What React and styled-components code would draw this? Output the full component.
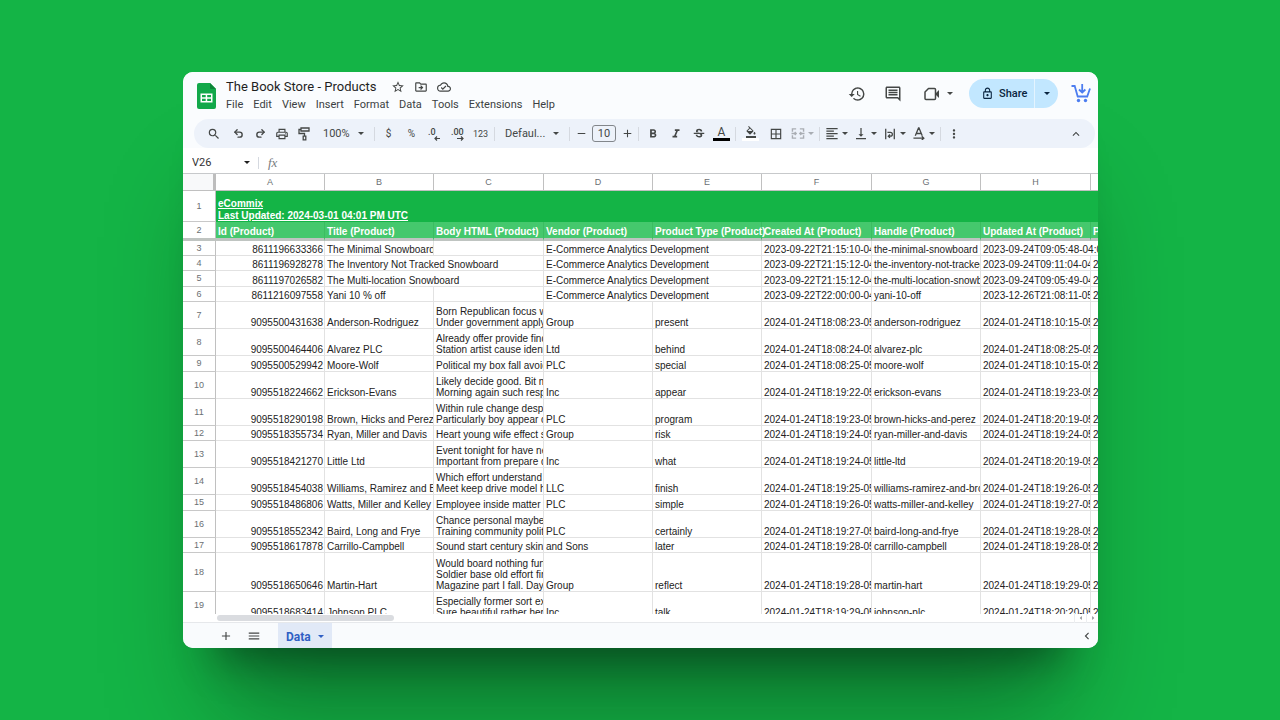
import styled, { createGlobalStyle } from "styled-components";
import { Undo2, Redo2 } from "lucide-react";
import {
  MdSearch,
  MdOutlinePrint,
  MdStarOutline,
  MdOutlineDriveFileMove,
  MdOutlineCloudDone,
  MdHistory,
  MdOutlineComment,
  MdOutlineLock,
  MdFormatBold,
  MdFormatItalic,
  MdStrikethroughS,
  MdFormatColorFill,
  MdBorderAll,
  MdFormatAlignLeft,
  MdVerticalAlignBottom,
  MdMoreVert,
  MdKeyboardArrowUp,
  MdKeyboardArrowLeft,
  MdArrowLeft,
  MdArrowRight,
  MdAdd,
  MdRemove,
  MdMenu,
} from "react-icons/md";

const GlobalStyle = createGlobalStyle`
  * {
    box-sizing: border-box;
  }

  body {
    margin: 0;
    background: #14b446;
    font-family: Roboto, "Liberation Sans", sans-serif;
    color: #1f1f1f;
  }

  button,
  input {
    margin: 0;
    padding: 0;
    border: 0;
    background: none;
    color: inherit;
    font: inherit;
  }
`;

const menus = [
  "File",
  "Edit",
  "View",
  "Insert",
  "Format",
  "Data",
  "Tools",
  "Extensions",
  "Help",
];

const columns = [
  { letter: "A", label: "Id (Product)", width: 109 },
  { letter: "B", label: "Title (Product)", width: 109 },
  { letter: "C", label: "Body HTML (Product)", width: 110 },
  { letter: "D", label: "Vendor (Product)", width: 109 },
  { letter: "E", label: "Product Type (Product)", width: 109 },
  { letter: "F", label: "Created At (Product)", width: 110 },
  { letter: "G", label: "Handle (Product)", width: 109 },
  { letter: "H", label: "Updated At (Product)", width: 110 },
  { letter: "", label: "P", width: 110 },
];

// row height, then one text per column; a null cell is covered by the text on its left
const rows = [
  [15, "8611196633366", "The Minimal Snowboard", "", "E-Commerce Analytics Development", null, "2023-09-22T21:15:10-04", "the-minimal-snowboard", "2023-09-24T09:05:48-04:0", null],
  [15, "8611196928278", "The Inventory Not Tracked Snowboard", null, "E-Commerce Analytics Development", null, "2023-09-22T21:15:12-04", "the-inventory-not-tracked", "2023-09-24T09:11:04-04", "2"],
  [16, "8611197026582", "The Multi-location Snowboard", null, "E-Commerce Analytics Development", null, "2023-09-22T21:15:12-04", "the-multi-location-snowbo", "2023-09-24T09:05:49-04", "2"],
  [15, "8611216097558", "Yani 10 % off", "", "E-Commerce Analytics Development", null, "2023-09-22T22:00:00-04", "yani-10-off", "2023-12-26T21:08:11-05", "2"],
  [27, "9095500431638", "Anderson-Rodriguez", "Born Republican focus w\nUnder government apply", "Group", "present", "2024-01-24T18:08:23-05", "anderson-rodriguez", "2024-01-24T18:10:15-05", "2"],
  [27, "9095500464406", "Alvarez PLC", "Already offer provide find\nStation artist cause identi", "Ltd", "behind", "2024-01-24T18:08:24-05", "alvarez-plc", "2024-01-24T18:08:25-05", "2"],
  [16, "9095500529942", "Moore-Wolf", "Political my box fall avoid", "PLC", "special", "2024-01-24T18:08:25-05", "moore-wolf", "2024-01-24T18:10:15-05", "2"],
  [27, "9095518224662", "Erickson-Evans", "Likely decide good. Bit m\nMorning again such respo", "Inc", "appear", "2024-01-24T18:19:22-05", "erickson-evans", "2024-01-24T18:19:23-05", "2"],
  [27, "9095518290198", "Brown, Hicks and Perez", "Within rule change despit\nParticularly boy appear o", "PLC", "program", "2024-01-24T18:19:23-05", "brown-hicks-and-perez", "2024-01-24T18:20:19-05", "2"],
  [15, "9095518355734", "Ryan, Miller and Davis", "Heart young wife effect st", "Group", "risk", "2024-01-24T18:19:24-05", "ryan-miller-and-davis", "2024-01-24T18:19:24-05", "2"],
  [27, "9095518421270", "Little Ltd", "Event tonight for have ne\nImportant from prepare d", "Inc", "what", "2024-01-24T18:19:24-05", "little-ltd", "2024-01-24T18:20:19-05", "2"],
  [27, "9095518454038", "Williams, Ramirez and Br", "Which effort understand f\nMeet keep drive model he", "LLC", "finish", "2024-01-24T18:19:25-05", "williams-ramirez-and-broo", "2024-01-24T18:19:26-05", "2"],
  [16, "9095518486806", "Watts, Miller and Kelley", "Employee inside matter r", "PLC", "simple", "2024-01-24T18:19:26-05", "watts-miller-and-kelley", "2024-01-24T18:19:27-05", "2"],
  [27, "9095518552342", "Baird, Long and Frye", "Chance personal maybe\nTraining community politi", "PLC", "certainly", "2024-01-24T18:19:27-05", "baird-long-and-frye", "2024-01-24T18:19:28-05", "2"],
  [15, "9095518617878", "Carrillo-Campbell", "Sound start century skin o", "and Sons", "later", "2024-01-24T18:19:28-05", "carrillo-campbell", "2024-01-24T18:19:28-05", "2"],
  [39, "9095518650646", "Martin-Hart", "Would board nothing func\nSoldier base old effort firs\nMagazine part I fall. Day", "Group", "reflect", "2024-01-24T18:19:28-05", "martin-hart", "2024-01-24T18:19:29-05", "2"],
  [27, "9095518683414", "Johnson PLC", "Especially former sort exe\nSure beautiful rather hers", "Inc", "talk", "2024-01-24T18:19:29-05", "johnson-plc", "2024-01-24T18:20:20-05", "2"],
];

const Stage = styled.main`
  display: flex;
  height: 100vh;
  padding: 72px 182px 72px 183px;
  background: #14b446;
  overflow: hidden;
`;

const Window = styled.section`
  flex: 1;
  min-width: 0;
  display: flex;
  flex-direction: column;
  border-radius: 10px;
  background: #fff;
  box-shadow:
    0 95px 100px -35px rgba(0, 20, 10, 0.4),
    0 45px 40px -35px rgba(0, 20, 10, 0.45);
`;

const Clip = styled.div`
  flex: 1;
  min-height: 0;
  display: flex;
  flex-direction: column;
  border-radius: 10px;
  overflow: hidden;
`;

const Top = styled.header`
  display: flex;
  height: 47px;
  flex: none;
  padding: 7px 7px 0 14px;
  background: #fafcfe;
`;

const Logo = styled.svg`
  width: 19px;
  height: 26px;
  margin-top: 4px;
  flex: none;
`;

const Names = styled.div`
  margin-left: 10px;
  flex: 1;
`;

const TitleRow = styled.div`
  display: flex;
  align-items: center;
  height: 16px;
  gap: 7px;
`;

const Title = styled.h1`
  margin: 0 7px 0 0;
  font-size: 13px;
  line-height: 16px;
  font-weight: 400;
  white-space: nowrap;
`;

const IconButton = styled.button`
  display: flex;
  align-items: center;
  justify-content: center;
  flex: none;
  width: ${(props) => props.$w || 16}px;
  height: ${(props) => props.$h || 16}px;
  color: #444746;
  font-size: ${(props) => props.$size || 14}px;
`;

const CallButton = styled(IconButton)`
  justify-content: flex-end;
  gap: 7px;
`;

const Menus = styled.nav`
  display: flex;
  gap: 10px;
  margin-top: 3px;
`;

const MenuButton = styled.button`
  font-size: 11px;
  line-height: 14px;
  color: #3c3f42;
`;

const Actions = styled.div`
  display: flex;
  align-items: center;
  height: 29px;
`;

const Caret = styled.span`
  flex: none;
  border: 3px solid transparent;
  border-top-color: currentColor;
  border-bottom: 0;
`;

const Share = styled.div`
  display: flex;
  height: 29px;
  margin: 0 13px 0 16px;
  border-radius: 15px;
  background: #c2e7ff;
  color: #0a2540;
  overflow: hidden;
`;

const ShareMain = styled.button`
  display: flex;
  align-items: center;
  gap: 5px;
  width: 65px;
  padding-left: 12px;
  font-size: 11px;
  font-weight: 500;
`;

const ShareMore = styled.button`
  display: flex;
  align-items: center;
  justify-content: center;
  width: 24px;
  border-left: 1px solid #e4f4ff;
`;

const ToolbarWrap = styled.div`
  flex: none;
  padding: 0 3px 0 11px;
  background: #fafcfe;
`;

const Toolbar = styled.div`
  display: flex;
  align-items: center;
  height: 29px;
  padding: 0 8px 0 7px;
  border-radius: 15px;
  background: #edf2fa;
  color: #444746;
`;

const Divider = styled.span`
  flex: none;
  width: 1px;
  height: ${(props) => props.$h || 14}px;
  margin: 0 2px;
  background: #d5d9e0;
`;

const PickerButton = styled.button`
  display: flex;
  align-items: center;
  justify-content: space-between;
  flex: none;
  width: ${(props) => props.$w}px;
  padding: 0 8px;
  font-size: 11px;
`;

const TextTool = styled(IconButton)`
  font-size: ${(props) => props.$size || 10}px;
`;

const DropTool = styled.button`
  display: flex;
  align-items: center;
  flex: none;
  gap: 2px;
  width: 29px;
  padding: 0 2px;
  font-size: 15px;
  color: ${(props) => (props.disabled ? "#a9adb3" : "#444746")};

  svg {
    width: 16px;
  }
`;

const SizeInput = styled.input`
  flex: none;
  width: 24px;
  height: 17px;
  margin: 0 2px;
  border: 1px solid #82868b;
  border-radius: 3px;
  font-size: 11px;
  text-align: center;
`;

const ColorTool = styled.button`
  display: flex;
  flex-direction: column;
  align-items: center;
  flex: none;
  width: ${(props) => props.$w}px;
  font-size: 12px;
  line-height: 12px;

  &::after {
    content: "";
    width: 17px;
    height: 3px;
    background: ${(props) => props.$bar};
  }
`;

const Push = styled.span`
  flex: 1;
`;

const FormulaBar = styled.div`
  display: flex;
  align-items: center;
  flex: none;
  height: 25px;
  padding: 4px 9px 0;
`;

const NameBox = styled.input`
  width: 52px;
  font-size: 11px;
  color: #333;
`;

const Fx = styled.label`
  margin: 0 8px 0 6px;
  padding-left: 1px;
  font-family: "Liberation Serif", serif;
  font-style: italic;
  font-size: 13px;
  color: #777b80;
`;

const NameMenu = styled.button`
  display: flex;
  width: 12px;
`;

const FormulaInput = styled.input`
  flex: 1;
  font-size: 11px;
  outline: none;
`;

const Grid = styled.div`
  flex: 1;
  min-height: 0;
  overflow: hidden;
  border-top: 1px solid #c7c9cb;
`;

const Table = styled.table`
  table-layout: fixed;
  width: 1018px;
  border-spacing: 0;
  font-family: "Liberation Sans", Arial, sans-serif;
  font-size: 10px;
  line-height: 11px;
`;

const Corner = styled.td`
  padding: 0;
  background: #f8f9fa;
  border-right: 3px solid #bdbdbd;
  border-bottom: 1px solid #c0c0c0;
`;

const ColHead = styled.th`
  padding: 0;
  border-right: 1px solid #c0c0c0;
  border-bottom: 1px solid #c0c0c0;
  font-size: 9px;
  font-weight: 400;
  color: #6b6f73;
`;

const RowHead = styled.th`
  padding: 0;
  border-right: 1px solid #c0c0c0;
  border-bottom: ${(props) => (props.$frozen ? "3px solid #bfc4c1" : "1px solid #c8c8c8")};
  font-size: 9px;
  font-weight: 400;
  color: #6b6f73;
  vertical-align: middle;
`;

const Row = styled.tr`
  height: ${(props) => props.$h}px;
`;

const Cell = styled.td`
  padding: 0 1px 0 2px;
  border-right: 1px solid #e2e2e2;
  border-bottom: 1px solid #e2e2e2;
  vertical-align: bottom;
  white-space: pre;
  overflow: hidden;
  color: #222;
  text-align: ${(props) => (props.$number ? "right" : "left")};
`;

const BannerCell = styled.td`
  padding: 0 2px;
  background: #14b446;
  vertical-align: bottom;
  line-height: 12px;
  color: #fff;
  font-weight: 700;

  a {
    color: inherit;
    white-space: pre;
  }
`;

const LabelCell = styled.th`
  padding: 2px 0 0 2px;
  border-right: 1px solid #3bbd62;
  border-bottom: 3px solid #bfc4c1;
  background: #45c86d;
  color: #fff;
  text-align: left;
  white-space: nowrap;
`;

const ScrollTrack = styled.div`
  display: flex;
  align-items: center;
  flex: none;
  height: 9px;
  padding-left: 34px;
  border-bottom: 1px solid #e6e8eb;
  color: #8c9094;
`;

const Thumb = styled.span`
  width: 177px;
  height: 6px;
  border-radius: 3px;
  background: #dadce0;
`;

const ScrollArrow = styled.button`
  display: flex;
  justify-content: center;
  width: 12px;
  border-left: 1px solid #eceef0;
`;

const Tabs = styled.footer`
  display: flex;
  align-items: center;
  flex: none;
  height: 25px;
  padding: 0 3px 0 31px;
  background: #f9fbfd;
`;

const Tab = styled.button`
  display: flex;
  align-items: center;
  gap: 7px;
  height: 25px;
  margin-left: 8px;
  padding: 2px 8px 0;
  background: #e1e9f7;
  color: #2f5fc4;
  font-size: 12px;
  font-weight: 700;
`;

const SheetsLogo = () => (
  <Logo viewBox="0 0 19 26">
    <path d="M2 0h11l6 6v18a2 2 0 0 1-2 2H2a2 2 0 0 1-2-2V2a2 2 0 0 1 2-2z" fill="#12a84a" />
    <path d="M13 0l6 6h-5a1 1 0 0 1-1-1z" fill="#0b8537" />
    <path d="M3.500 10.500h12v9h-12zM5 12v2.200h3.700V12zm5.200 0v2.200H14V12zM5 15.700V18h3.700v-2.300zm5.200 0V18H14v-2.300z" fill="#fff" fillRule="evenodd" />
  </Logo>
);

const VideoIcon = () => (
  <svg width="16" height="14" viewBox="0 0 16 14" fill="none" stroke="currentColor" strokeWidth="1.500">
    <path d="M4.500 1.500h6a1 1 0 0 1 1 1v9a1 1 0 0 1-1 1h-8.500a1 1 0 0 1-1-1v-6.500z" strokeLinejoin="round" />
    <path d="M12 6l3-3v8l-3-3z" fill="currentColor" stroke="none" />
  </svg>
);

const CartIcon = () => (
  <svg width="20" height="19" viewBox="0 0 20 19" fill="none" stroke="#4c7df0" strokeWidth="1.800">
    <path d="M.5 2h3.200l3 10.500h9.500L19 4.500" />
    <path d="M11.200 0v8M8 5.500l3.200 3 3.200-3" />
    <circle cx="7.500" cy="16.500" r="1.700" fill="#4c7df0" stroke="none" />
    <circle cx="14.500" cy="16.500" r="1.700" fill="#4c7df0" stroke="none" />
  </svg>
);

const RollerIcon = () => (
  <svg width="12" height="14" viewBox="0 0 12 14" fill="none" stroke="currentColor" strokeWidth="1.300">
    <path d="M3 1h8v3H3zM3 2.500H1v4h5.500V9M5.200 9.200h2.600v3.600H5.200z" />
  </svg>
);

const DecimalIcon = ({ zeros, more }) => (
  <svg width="14" height="14" viewBox="0 0 14 14" fill="none" stroke="currentColor" strokeWidth="1.200">
    <text x="0" y="8" fill="currentColor" stroke="none" fontSize="9" fontWeight="500">
      {zeros}
    </text>
    <path d={more ? "M6 11.500h6M10 9.500l2 2-2 2" : "M12 11.500H7M9 9.500l-2 2 2 2"} />
  </svg>
);

const MergeIcon = () => (
  <svg height="13" viewBox="0 0 16 14" fill="none" stroke="currentColor" strokeWidth="1.500">
    <path d="M6 2H2v3M10 2h4v3M6 12H2V9M10 12h4V9M1 7h5M15 7h-5M4.500 5.500L6 7 4.500 8.500M11.500 5.500L10 7l1.500 1.500" />
  </svg>
);

const WrapIcon = () => (
  <svg height="12" viewBox="0 0 16 14" fill="none" stroke="currentColor" strokeWidth="1.500">
    <path d="M3 1v12M13 1v12M5 5h3.500a2 2 0 0 1 0 4.500H6.500M8 7.500l-2 2 2 2" />
  </svg>
);

const RotateIcon = () => (
  <svg height="13" viewBox="0 0 16 14" fill="none" stroke="currentColor" strokeWidth="1.400">
    <path d="M4 9.500L7.500 1h.5l3.500 8.500M5.200 7h5M2 12h11M11 10l2.200 2-2.200 2" />
  </svg>
);

const AppHeader = () => (
  <Top>
    <SheetsLogo />
    <Names>
      <TitleRow>
        <Title>The Book Store - Products</Title>
        <IconButton aria-label="Star">
          <MdStarOutline />
        </IconButton>
        <IconButton aria-label="Move">
          <MdOutlineDriveFileMove />
        </IconButton>
        <IconButton aria-label="Saved to cloud">
          <MdOutlineCloudDone />
        </IconButton>
      </TitleRow>
      <Menus>
        {menus.map((menu) => (
          <MenuButton key={menu}>{menu}</MenuButton>
        ))}
      </Menus>
    </Names>
    <Actions>
      <IconButton aria-label="History" $w={36} $size={18}>
        <MdHistory />
      </IconButton>
      <IconButton aria-label="Comments" $w={36} $size={18}>
        <MdOutlineComment />
      </IconButton>
      <CallButton aria-label="Join a call" $w={42}>
        <VideoIcon />
        <Caret />
      </CallButton>
      <Share>
        <ShareMain>
          <MdOutlineLock size={13} />
          Share
        </ShareMain>
        <ShareMore aria-label="Share options">
          <Caret />
        </ShareMore>
      </Share>
      <IconButton aria-label="Add-on" $w={20} $h={20}>
        <CartIcon />
      </IconButton>
    </Actions>
  </Top>
);

const FormatToolbar = () => (
  <ToolbarWrap>
    <Toolbar role="toolbar">
      <IconButton aria-label="Search" $w={26}><MdSearch /></IconButton>
      <IconButton aria-label="Undo" $w={22}><Undo2 size={11} strokeWidth={3} /></IconButton>
      <IconButton aria-label="Redo" $w={22}><Redo2 size={11} strokeWidth={3} /></IconButton>
      <IconButton aria-label="Print" $w={22}><MdOutlinePrint /></IconButton>
      <IconButton aria-label="Paint format" $w={22}><RollerIcon /></IconButton>
      <PickerButton $w={57}>100% <Caret /></PickerButton>
      <Divider />
      <TextTool $w={23}>$</TextTool>
      <TextTool $w={23}>%</TextTool>
      <TextTool $w={23} aria-label="Fewer decimals"><DecimalIcon zeros=".0" /></TextTool>
      <TextTool $w={23} aria-label="More decimals"><DecimalIcon zeros=".00" more /></TextTool>
      <TextTool $w={23} $size={9}>123</TextTool>
      <Divider />
      <PickerButton $w={70}>Defaul... <Caret /></PickerButton>
      <Divider />
      <IconButton aria-label="Smaller" $w={18} $size={13}><MdRemove /></IconButton>
      <SizeInput aria-label="Font size" defaultValue="10" />
      <IconButton aria-label="Larger" $w={18} $size={13}><MdAdd /></IconButton>
      <Divider />
      <IconButton aria-label="Bold" $w={23}><MdFormatBold /></IconButton>
      <IconButton aria-label="Italic" $w={23}><MdFormatItalic /></IconButton>
      <IconButton aria-label="Strikethrough" $w={23}><MdStrikethroughS /></IconButton>
      <ColorTool $w={23} $bar="#000">A</ColorTool>
      <Divider />
      <ColorTool $w={25} $bar="#fff" aria-label="Fill color"><MdFormatColorFill /></ColorTool>
      <IconButton aria-label="Borders" $w={25}><MdBorderAll /></IconButton>
      <DropTool aria-label="Merge cells" disabled><MergeIcon /><Caret /></DropTool>
      <Divider />
      <DropTool aria-label="Horizontal align"><MdFormatAlignLeft /><Caret /></DropTool>
      <DropTool aria-label="Vertical align"><MdVerticalAlignBottom /><Caret /></DropTool>
      <DropTool aria-label="Text wrapping"><WrapIcon /><Caret /></DropTool>
      <DropTool aria-label="Text rotation"><RotateIcon /><Caret /></DropTool>
      <Divider />
      <IconButton aria-label="More" $w={22}><MdMoreVert /></IconButton>
      <Push />
      <IconButton aria-label="Hide the menus" $w={22}><MdKeyboardArrowUp /></IconButton>
    </Toolbar>
  </ToolbarWrap>
);

const SheetRow = ({ number, height, cells }) => (
  <Row $h={height}>
    <RowHead scope="row">{number}</RowHead>
    {cells.map((text, i) =>
      text === null ? null : (
        <Cell key={i} $number={i === 0} colSpan={cells[i + 1] === null ? 2 : 1}>
          {text}
        </Cell>
      ),
    )}
  </Row>
);

const Sheet = () => (
  <Grid>
    <Table>
      <colgroup>
        <col width="33" />
        {columns.map((column) => (
          <col key={column.label} width={column.width} />
        ))}
      </colgroup>
      <tbody>
        <Row $h={17}>
          <Corner />
          {columns.map((column) => (
            <ColHead key={column.label} scope="col">{column.letter}</ColHead>
          ))}
        </Row>
        <Row $h={31}>
          <RowHead scope="row">1</RowHead>
          <BannerCell colSpan={9}>
            <a href="#ecommix">{"eCommix\nLast Updated: 2024-03-01 04:01 PM UTC"}</a>
          </BannerCell>
        </Row>
        <Row $h={19}>
          <RowHead scope="row" $frozen>2</RowHead>
          {columns.map((column) => (
            <LabelCell key={column.label}>{column.label}</LabelCell>
          ))}
        </Row>
        {rows.map(([height, ...cells], i) => (
          <SheetRow key={cells[0]} number={i + 3} height={height} cells={cells} />
        ))}
      </tbody>
    </Table>
  </Grid>
);

const App = () => (
  <>
    <GlobalStyle />
    <Stage>
      <Window>
        <Clip>
          <AppHeader />
          <FormatToolbar />
          <FormulaBar>
            <NameBox aria-label="Name box" defaultValue="V26" />
            <NameMenu aria-label="Named ranges"><Caret /></NameMenu>
            <Divider $h={12} />
            <Fx htmlFor="formula">fx</Fx>
            <FormulaInput id="formula" />
          </FormulaBar>
          <Sheet />
          <ScrollTrack>
            <Thumb />
            <Push />
            <ScrollArrow aria-label="Scroll left"><MdArrowLeft size={10} /></ScrollArrow>
            <ScrollArrow aria-label="Scroll right"><MdArrowRight size={10} /></ScrollArrow>
          </ScrollTrack>
          <Tabs>
            <IconButton aria-label="Add sheet" $w={24}><MdAdd /></IconButton>
            <IconButton aria-label="All sheets" $w={32}><MdMenu /></IconButton>
            <Tab>Data <Caret /></Tab>
            <Push />
            <IconButton aria-label="Side panel"><MdKeyboardArrowLeft /></IconButton>
          </Tabs>
        </Clip>
      </Window>
    </Stage>
  </>
);

export default App;
